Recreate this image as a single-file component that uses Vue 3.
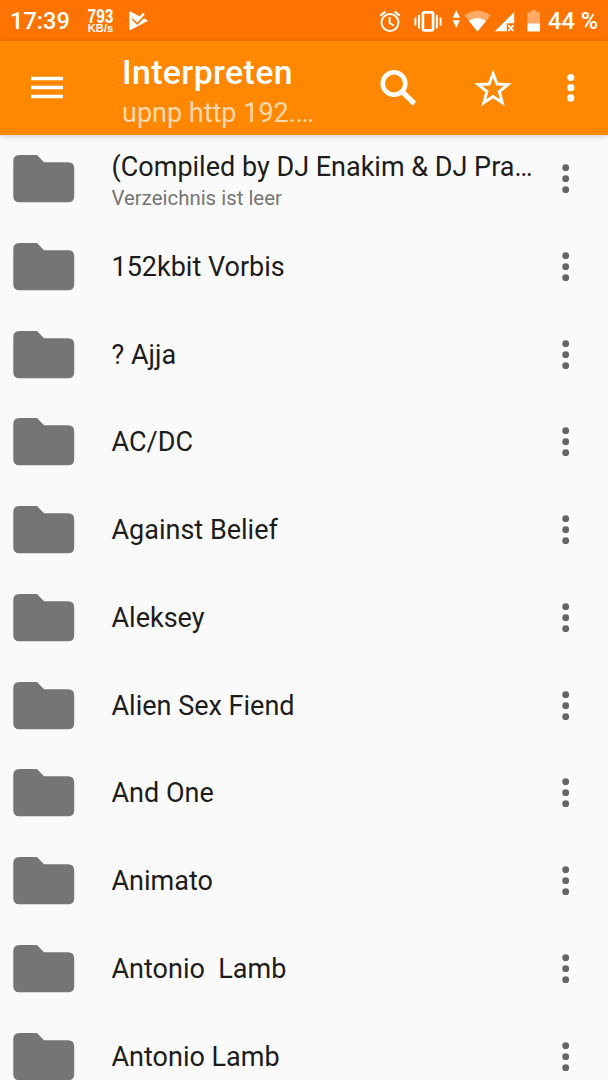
<template>
  <div class="screen">
    <div class="status-bar">
      <span class="clock">17:39</span>
      <div class="speed">
        <span class="speed-value">793</span>
        <span class="speed-unit">KB/s</span>
      </div>
      <svg class="check-icon" width="22" height="22" viewBox="0 0 22 22">
        <path d="M2 1.6 L19.2 10.1 Q20 10.6 19.2 11.2 L2.6 20 Q1.3 20.4 1.3 19 V2.2 Q1.3 1.3 2 1.6Z" fill="#fff" />
        <path d="M4.8 8.2 L9.2 12.4 L17 4.4" fill="none" stroke="#ff7300" stroke-width="3.6" />
        <path d="M5.6 7.8 L9.2 11 L15.8 3.6" fill="none" stroke="#fff" stroke-width="2.6" />
      </svg>

      <svg class="system-icons" width="166" height="40" viewBox="376 0 166 40">
        <!-- alarm -->
        <g fill="none" stroke="#fff" stroke-width="1.9">
          <circle cx="390" cy="21.5" r="8.5" />
          <path d="M389.6 16 V22 L394 24.7" />
          <path d="M380.4 14.7 L385.4 10.6 M394.6 10.6 L399.6 14.7" stroke-width="2.2" />
        </g>
        <!-- vibration -->
        <rect x="422.9" y="11.3" width="10.2" height="18" rx="1" fill="none" stroke="#fff" stroke-width="2.7" />
        <path d="M415.4 16.5 V24.5 M419 14 V27.4 M436.9 14 V27.4 M440.6 16.5 V24.5" stroke="#fff" stroke-width="2" />
        <!-- data arrows -->
        <path d="M456.3 9.3 L460 16.7 H452.6Z M452.6 19.3 H460 L456.3 26.8Z" fill="#fff" />
        <!-- wifi -->
        <path d="M464.4 14.6 Q477.5 5 490.6 14.6 L477.5 30.4Z" fill="#ffab66" />
        <path d="M468.9 20 Q477.5 14 486.1 20 L477.5 30.4Z" fill="#fff" />
        <!-- mobile signal -->
        <path d="M514.2 11 V22.3 H506.8 V30.3 H494.8Z" fill="#fff" />
        <path d="M508.4 24.4 L513.4 30 M513.4 24.4 L508.4 30" stroke="#fff" stroke-width="1.8" />
        <!-- battery -->
        <path d="M531.2 9.2 H536.3 V11.3 H538.8 Q540 11.3 540 12.5 V23 H527.4 V12.5 Q527.4 11.3 528.6 11.3 H531.2Z" fill="#ffab66" />
        <path d="M527.4 22.6 H540 V29.4 Q540 30.6 538.8 30.6 H528.6 Q527.4 30.6 527.4 29.4Z" fill="#fff" />
      </svg>
      <span class="battery">44 %</span>
    </div>

    <header class="toolbar">
      <svg class="menu-icon" width="32" height="24" viewBox="0 0 32 24">
        <path d="M0 2.5 H32 M0 11.5 H32 M0 20.5 H32" stroke="#fff" stroke-width="3.6" />
      </svg>
      <div class="heading">
        <h1>Interpreten</h1>
        <p>upnp http 192.…</p>
      </div>
      <svg class="actions" width="248" height="94" viewBox="360 41 248 94">
        <circle cx="394" cy="83.5" r="11.3" fill="none" stroke="#fff" stroke-width="4.6" />
        <path d="M402.4 91.8 L414.4 103.6" stroke="#fff" stroke-width="5.2" />
        <path
          d="M493.1 73.6 L497 84 L508 84.5 L499.3 91.5 L502.3 102.6 L493.1 96.6 L483.9 102.6 L486.9 91.5 L478.2 84.5 L489.2 84Z"
          fill="none"
          stroke="#fff"
          stroke-width="2.9"
        />
        <g fill="#fff">
          <circle cx="570.8" cy="77.5" r="3.6" />
          <circle cx="570.8" cy="87.7" r="3.6" />
          <circle cx="570.8" cy="97.9" r="3.6" />
        </g>
      </svg>
    </header>

    <ul class="list">
      <li v-for="(item, index) in artists" :key="index" class="row">
        <svg class="folder" width="62" height="48" viewBox="0 0 62 48">
          <path
            d="M6.5 0 H24 L31 7.2 H55 Q61.2 7.2 61.2 13.4 V41.2 Q61.2 47.3 55 47.3 H6.5 Q.3 47.3 .3 41.2 V6.2 Q.3 0 6.5 0Z"
            fill="#757575"
          />
        </svg>
        <div :class="['texts', item.info ? 'two-lines' : '']">
          <div class="name">{{ item.name }}</div>
          <div v-if="item.info" class="info">{{ item.info }}</div>
        </div>
        <svg class="more" width="8" height="30" viewBox="0 0 8 30">
          <g fill="#666">
            <circle cx="3.7" cy="3.7" r="3.4" />
            <circle cx="3.7" cy="14.7" r="3.4" />
            <circle cx="3.7" cy="25.7" r="3.4" />
          </g>
        </svg>
      </li>
    </ul>
  </div>
</template>

<script setup>
import { ref } from "vue";

const artists = ref([
  { name: "(Compiled by DJ Enakim & DJ Pra…", info: "Verzeichnis ist leer" },
  { name: "152kbit Vorbis" },
  { name: "? Ajja" },
  { name: "AC/DC" },
  { name: "Against Belief" },
  { name: "Aleksey" },
  { name: "Alien Sex Fiend" },
  { name: "And One" },
  { name: "Animato" },
  { name: "Antonio  Lamb" },
  { name: "Antonio Lamb" },
]);
</script>

<style>
body {
  margin: 0;
  background-color: #fafafa;
}
</style>

<style scoped>
.screen {
  display: flex;
  flex-direction: column;
  width: 608px;
  height: 1080px;
  overflow: hidden;
  background-color: #fafafa;
  font-family: Roboto, "Noto Sans", sans-serif;
}

.status-bar {
  display: flex;
  flex: none;
  align-items: center;
  height: 41px;
  box-sizing: border-box;
  padding-left: 10px;
  background-color: #ff7300;
  color: #fff;
}

.clock,
.battery {
  font-size: 23.6px;
  font-weight: 500;
  line-height: 40px;
  white-space: nowrap;
}

.clock {
  width: 77px;
}

.speed {
  display: flex;
  flex-direction: column;
  align-items: center;
  width: 27px;
  font-family: "Liberation Sans", sans-serif;
  font-weight: bold;
}

.speed-value {
  font-size: 15px;
  line-height: 15px;
  transform: scale(1.03, 1.3);
}

.speed-unit {
  font-size: 11.2px;
  line-height: 11px;
}

.check-icon {
  margin-left: 14px;
}

.system-icons {
  flex: none;
  margin-left: 226px;
}

.battery {
  margin-left: 6px;
}

.toolbar {
  display: flex;
  flex: none;
  align-items: center;
  height: 94px;
  box-sizing: border-box;
  padding-left: 31px;
  background-color: #ff8800;
  color: #fff;
  box-shadow: 0 1px 6px rgba(0, 0, 0, 0.2);
}

.menu-icon {
  flex: none;
}

.heading {
  width: 238px;
  margin-left: 59px;
  padding-top: 9px;
  white-space: nowrap;
}

.heading h1 {
  margin: 0;
  font-size: 33.8px;
  font-weight: 500;
  line-height: 40px;
  letter-spacing: 0.4px;
}

.heading p {
  margin: 0;
  font-size: 27px;
  line-height: 40px;
  color: #ffd9ad;
}

.actions {
  flex: none;
}

.list {
  margin: 0;
  padding: 0.3px 0 0;
  list-style: none;
}

.row {
  display: flex;
  align-items: center;
  height: 87.75px;
  padding-left: 13px;
}

.folder,
.more {
  flex: none;
}

.texts {
  width: 430px;
  margin-left: 36.5px;
}

.two-lines {
  padding-top: 3.4px;
}

.name {
  font-size: 27px;
  line-height: 34px;
  color: #1c1c1c;
  white-space: pre;
}

.info {
  font-size: 20.4px;
  line-height: 28px;
  color: #757575;
}

.more {
  margin-left: 20px;
}
</style>
